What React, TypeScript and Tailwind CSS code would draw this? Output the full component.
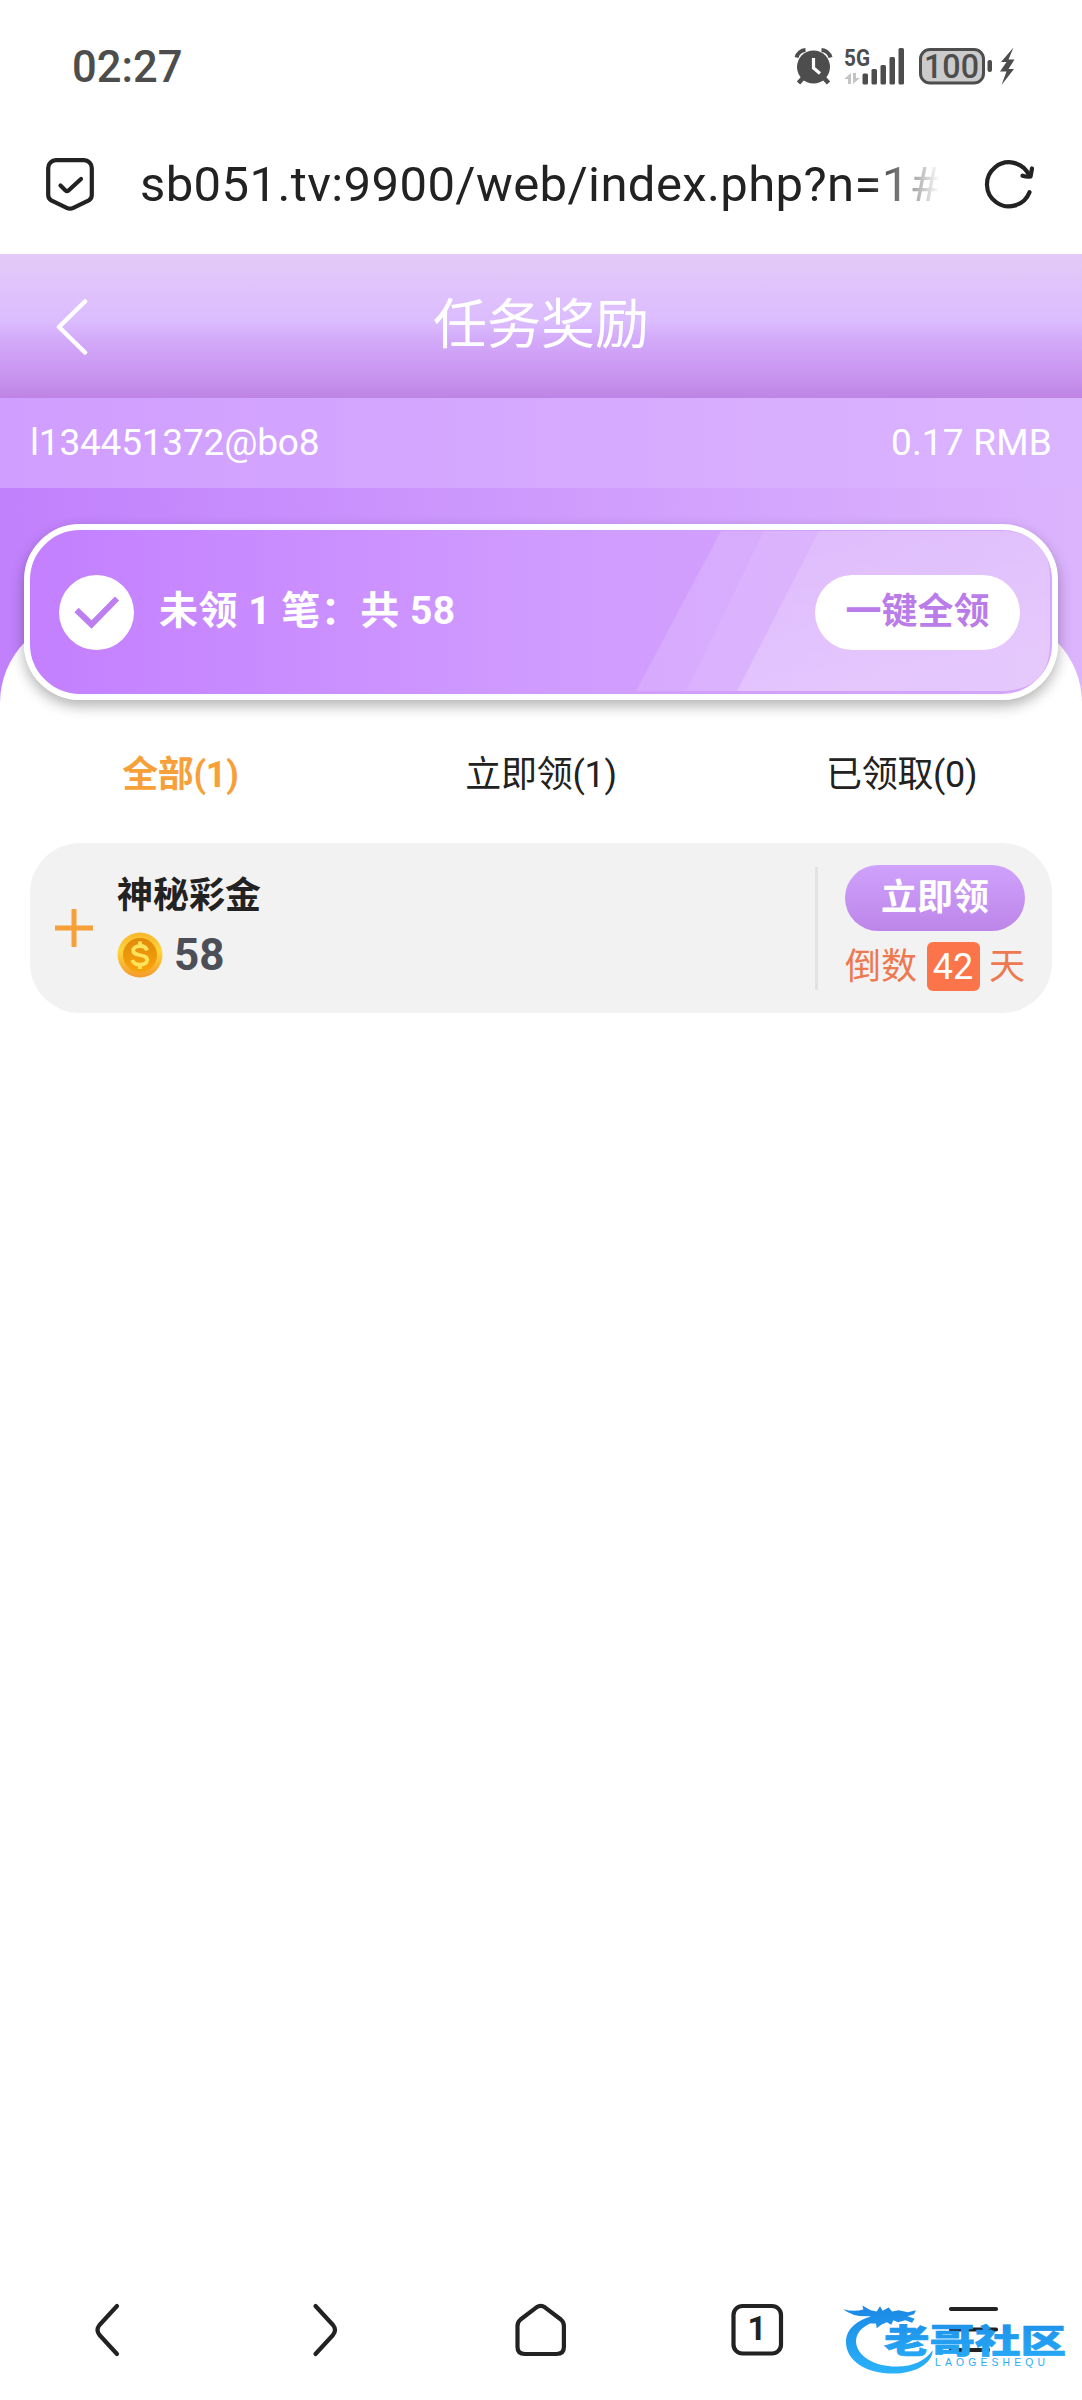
const tabs = [
  { label: "全部(1)", active: true },
  { label: "立即领(1)", active: false },
  { label: "已领取(0)", active: false },
];

function StatusIcons() {
  return (
    <svg className="w-[222px] h-10 overflow-visible" viewBox="795 46 222 40" fill="#4d4d4d">
      <circle cx="813.5" cy="67" r="16.5" />
      <path
        d="M796.5 57.5a10 10 0 0 1 9-7.500M830.500 57.500a10 10 0 0 0-9-7.500"
        stroke="#4d4d4d"
        strokeWidth="4"
        fill="none"
      />
      <path d="M803 78l-4.500 5M824 78l4.500 5" stroke="#4d4d4d" strokeWidth="4.500" fill="none" />
      <path d="M813.500 58v10l6.500 5.500" stroke="#fff" strokeWidth="3.200" fill="none" />
      <text
        x="844"
        y="66"
        fontSize="24"
        fontWeight="700"
        textLength="26"
        lengthAdjust="spacingAndGlyphs"
        fontFamily="Roboto, sans-serif"
      >
        5G
      </text>
      <path d="M844 79l7-6v11h-3v-5zM860 78l-7 6V73h3v5z" fill="#c4c4c4" />
      <rect x="862.500" y="73.500" width="5.500" height="11" rx="1.500" />
      <rect x="871.500" y="69" width="5.500" height="15.500" rx="1.500" />
      <rect x="880.500" y="65" width="5.500" height="19.500" rx="1.500" />
      <rect x="889.500" y="57" width="5.500" height="27.500" rx="1.500" />
      <rect x="898.500" y="48" width="5.500" height="36.500" rx="1.500" />
      <rect x="920.500" y="49.500" width="63" height="33.500" rx="9.500" fill="#cbcbcb" stroke="#4d4d4d" strokeWidth="3" />
      <text
        x="924"
        y="78"
        fontSize="33"
        fontWeight="500"
        textLength="55"
        lengthAdjust="spacingAndGlyphs"
        fontFamily="Roboto, sans-serif"
      >
        100
      </text>
      <rect x="987.500" y="60" width="4.500" height="12" rx="2" />
      <path d="M1013.500 47.500L1001 62h5.500L1000 71.500h6.500L1001.500 85 1014 69h-5.500L1014.500 59.500h-6z" />
    </svg>
  );
}

function ShieldIcon() {
  return (
    <svg className="w-12 h-[53px]" viewBox="0 0 48 53" fill="none" stroke="#222" strokeWidth="4.200" strokeLinecap="round" strokeLinejoin="round">
      <path d="M10 2.200h28a7.800 7.800 0 0 1 7.800 7.800v27c0 2.500-1 4.200-3 5.400l-15.500 7.400a7 7 0 0 1-6.600 0L5.200 42.400c-2-1.200-3-2.900-3-5.400V10A7.800 7.800 0 0 1 10 2.200z" />
      <path d="M14.500 27.500l5 5q1.500 1.300 3 0L35 21" />
    </svg>
  );
}

function ReloadIcon() {
  return (
    <svg className="w-[50px] h-[50px] overflow-visible" viewBox="984 158 50 50" fill="none" stroke="#222" strokeWidth="4.200" strokeLinecap="round" strokeLinejoin="round">
      <path d="M1029.500 191.200a22 22 0 1 1-.5-17" />
      <path d="M1032 167.500l-1.500 8q-3 .8-8-.8" />
    </svg>
  );
}

function CoinIcon() {
  return (
    <svg className="w-[46px] h-[46px]" viewBox="0 0 46 46">
      <defs>
        <linearGradient id="coinRim" x1="0" y1="0" x2="0" y2="1">
          <stop offset="0" stopColor="#f8b62d" />
          <stop offset="0.400" stopColor="#fdd53a" />
          <stop offset="1" stopColor="#f39a2c" />
        </linearGradient>
        <linearGradient id="coinFace" x1="0" y1="0" x2="0" y2="1">
          <stop offset="0" stopColor="#e08a0c" />
          <stop offset="1" stopColor="#f9a30a" />
        </linearGradient>
      </defs>
      <circle cx="23" cy="23" r="22.500" fill="url(#coinRim)" />
      <circle cx="23" cy="23" r="17" fill="url(#coinFace)" />
      <path
        d="M30 18.500c-.8-3-3.500-4.500-7-4.500-4 0-6.800 1.800-6.800 4.500 0 6.500 14 3 14 9.300 0 3-3 4.900-7.200 4.900-4 0-6.800-1.500-7.600-4.700M23 9.500v4M23 33v4"
        fill="none"
        stroke="#fde35a"
        strokeWidth="3.800"
      />
    </svg>
  );
}

function CardStripes() {
  return (
    <svg className="absolute right-0.5 inset-y-0 w-[390px] h-full overflow-visible" viewBox="0 0 390 164" preserveAspectRatio="none">
      <defs>
        <linearGradient id="shine" x1="0" y1="0" x2="0.300" y2="1">
          <stop offset="0" stopColor="#fff" stopOpacity="0.100" />
          <stop offset="1" stopColor="#fff" stopOpacity="0.240" />
        </linearGradient>
      </defs>
      <path d="M61 1H345Q390 4 390 48V114Q390 158 345 161H-24z" fill="#fff" fillOpacity="0.140" />
      <path d="M104 1H345Q390 4 390 48V114Q390 158 345 161H26z" fill="#fff" fillOpacity="0.080" />
      <path d="M159 1H345Q390 4 390 48V114Q390 158 345 161H77z" fill="url(#shine)" />
    </svg>
  );
}

function Watermark() {
  return (
    <svg className="absolute left-[840px] top-[30px] w-[230px] h-[77px]" viewBox="480 90 690 230">
      <defs>
        <linearGradient id="wm" x1="0" y1="100" x2="0" y2="310" gradientUnits="userSpaceOnUse">
          <stop offset="0" stopColor="#1a86e4" />
          <stop offset="1" stopColor="#2ab2fa" />
        </linearGradient>
      </defs>
      <g fill="url(#wm)">
        {/* ring */}
        <path d="M600 134C540 142 498 172 498 216C498 270 556 310 640 310C705 310 757 280 758 240C738 270 700 289 650 289C582 289 530 258 528 214C528 182 556 160 600 150z" />
        {/* dragon head and whiskers */}
        <path d="M490 117Q520 126 550 118L547 106L572 120L590 124L600 108L608 122L626 112L636 124L656 120L684 126L708 120L702 132L682 138L704 146L696 158L676 150L654 156L640 150L634 164L620 156L604 164L590 174L588 160L572 160L580 148L560 150L572 138Q520 142 490 117z" />
        <text
          x="612"
          y="248"
          fontSize="98"
          fontWeight="900"
          textLength="546"
          lengthAdjust="spacingAndGlyphs"
          fontFamily="'Noto Sans CJK SC', sans-serif"
          stroke="url(#wm)"
          strokeWidth="2"
        >
          老哥社区
        </text>
        <text x="765" y="289" fontSize="31" textLength="330" fontFamily="'Liberation Sans', sans-serif">
          LAOGESHEQU
        </text>
      </g>
    </svg>
  );
}

function BottomNav() {
  return (
    <nav className="relative h-[130px]">
      <svg className="w-full h-full" viewBox="0 2270 1082 130" fill="none" stroke="#222" strokeWidth="4.200" strokeLinecap="round" strokeLinejoin="round">
        <path d="M117 2306l-17.500 19q-4 5 0 10l17.500 19" />
        <path d="M315.500 2306l17.500 19q4 5 0 10l-17.500 19" />
        <path d="M517.500 2347v-21q0-4 3-6.500l16-12.200q4.200-3 8.400 0l16 12.200q3 2.500 3 6.500v21q0 7-7.500 7h-31.400q-7.500 0-7.500-7z" />
        <rect x="733.500" y="2306" width="47.500" height="47.500" rx="9" />
        <text x="757" y="2340" fontSize="33" fontWeight="700" textAnchor="middle" fill="#222" stroke="none" fontFamily="Roboto, sans-serif">
          1
        </text>
        <path d="M951 2309h45M951 2329.500h45M951 2350h37" />
      </svg>
      <Watermark />
    </nav>
  );
}

function App() {
  return (
    <div className="flex h-[2400px] w-[1082px] flex-col overflow-hidden bg-white text-[#222] font-['Roboto','Noto_Sans_CJK_SC',sans-serif]">
      <div className="flex h-[87px] items-end justify-between pl-[72px] pr-[65px] pb-px">
        <div className="mb-[-7px] text-[43.5px] leading-[50px] font-medium text-[#4d4d4d]">02:27</div>
        <StatusIcons />
      </div>

      <div className="flex h-[167px] items-center pl-[46px] pr-[48px] pt-[28px]">
        <ShieldIcon />
        <div className="ml-[46px] w-[799px] overflow-hidden text-[49px] leading-[60px] tracking-[0.4px] whitespace-nowrap [mask-image:linear-gradient(to_right,#000_728px,#0008_765px,transparent_800px)]">
          sb051.tv:9900/web/index.php?n=1#
        </div>
        <div className="ml-auto pb-0.5">
          <ReloadIcon />
        </div>
      </div>

      <header className="relative flex h-[144px] items-center justify-center bg-[linear-gradient(180deg,#e3caf7_0%,#dbbcff_47%,#d3a9f9_60%,#c893ee_86%,#be84e4_100%)] text-white">
        <svg className="absolute left-[56px] top-[44px] h-[58px] w-8" viewBox="0 0 32 58" fill="none" stroke="#fff" strokeWidth="4.500" strokeLinecap="round" strokeLinejoin="round">
          <path d="M29 3.500L3 29l26 25.500" />
        </svg>
        <h1 className="text-[54px] leading-none">任务奖励</h1>
      </header>

      <div className="flex h-[90px] items-center justify-between bg-linear-to-r from-[#d09eff] to-[#dbb4ff] px-[30px] text-[37px] text-white">
        <span className="tracking-[-0.2px]">l134451372@bo8</span>
        <span className="tracking-[0.2px]">0.17 RMB</span>
      </div>

      <section className="relative h-[215px] bg-linear-to-r from-[#c180fc] to-[#dcb4fd] px-6 pt-9">
        <div className="absolute inset-x-0 bottom-0 h-[87px] rounded-t-[87px] bg-white" />
        <div className="relative flex h-44 items-center overflow-hidden rounded-[56px] border-6 border-white bg-[linear-gradient(90deg,#c37fff_0%,#d09bff_50%,#d5a6fb_100%)] bg-origin-border pl-[29px] pr-[32px] shadow-[0_6px_14px_rgba(0,0,0,0.3)]">
          <CardStripes />
          <svg className="relative h-[75px] w-[75px]" viewBox="0 0 75 75">
            <circle cx="37.500" cy="37.500" r="37.500" fill="#fff" />
            <path d="M17.500 35l15 14.500L58 23.500" fill="none" stroke="#bd7ff0" strokeWidth="6" />
          </svg>
          <div className="relative ml-[25px] pb-0.5 text-[39px] font-bold tracking-[0.5px] text-white">未领 1 笔：共 58</div>
          <button type="button" className="relative ml-auto h-[75px] w-[205px] rounded-full bg-white text-[36px] font-bold text-[#b97ce8]">
            一键全领
          </button>
        </div>
      </section>

      <div className="grid h-[140px] grid-cols-3 items-center pt-1 text-center text-[36px] tracking-[-0.3px]">
        {tabs.map((tab) => (
          <div key={tab.label} className={tab.active ? "font-bold text-[#f7a03a]" : ""}>
            {tab.label}
          </div>
        ))}
      </div>

      <div className="mx-[30px] flex h-[170px] items-center rounded-[50px] bg-[#f2f2f2] pl-[25px] pr-[27px]">
        <svg className="h-[38px] w-[38px]" viewBox="0 0 38 38" stroke="#f7a03a" strokeWidth="5">
          <path d="M19 0v38M0 19h38" />
        </svg>
        <div className="mb-1 ml-[24px] flex flex-col gap-[14px]">
          <div className="text-[36px] leading-[44px] font-bold">神秘彩金</div>
          <div className="flex items-center gap-[11px]">
            <CoinIcon />
            <span className="text-[44px] leading-[46px] font-bold text-[#4c4e58]">58</span>
          </div>
        </div>
        <div className="ml-auto h-[123px] w-[3px] bg-[#e2e2e2]" />
        <div className="ml-[27px] flex w-[180px] flex-col gap-[11px]">
          <button type="button" className="h-[66px] rounded-full bg-linear-to-b from-[#cfa2fc] to-[#bd85e9] text-[36px] leading-[62px] font-bold text-white">
            立即领
          </button>
          <div className="flex h-[49px] items-center justify-between text-[36px] text-[#ee7850]">
            <span>倒数</span>
            <span className="flex h-[49px] w-[53px] items-center justify-center rounded-md bg-[#fc744a] text-white">42</span>
            <span>天</span>
          </div>
        </div>
      </div>

      <div className="flex-1" />
      <BottomNav />
    </div>
  );
}

export default App;
